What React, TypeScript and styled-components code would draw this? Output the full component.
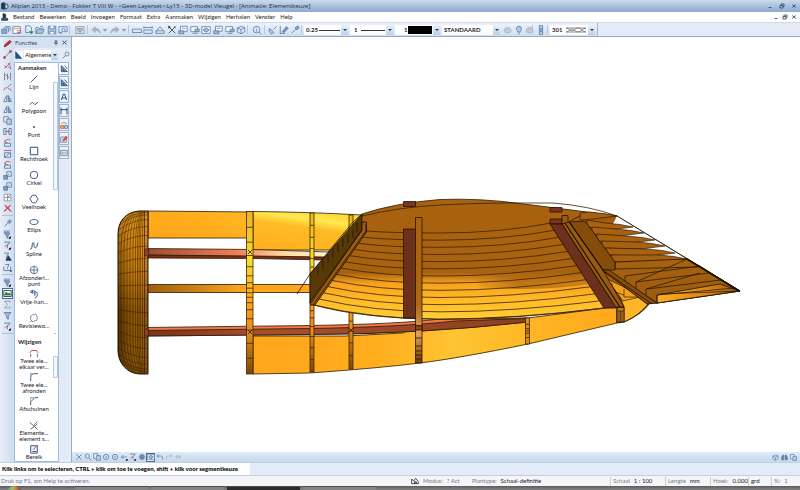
import React from 'react';
import styled, { createGlobalStyle } from 'styled-components';

const ui = 'Lato, "Open Sans", sans-serif';
const titleFont = '"Open Sans", "Noto Sans", sans-serif';
const blue = '#5d7fa8';
const red = '#d0505a';
const grey = '#a9b2be';

const GlobalStyle = createGlobalStyle`
  *, *::before, *::after { box-sizing: border-box; }
  html, body { margin: 0; padding: 0; }
  body { font-family: ${ui}; font-size: 6px; line-height: 6px; color: #1f2329; background: #e3ebf6; overflow: hidden; }
  button, select { font: inherit; color: inherit; margin: 0; padding: 0; border: 0; background: none; border-radius: 0; }
`;

/* ---------- icons ---------- */

type Stroke = [d: string, stroke?: string, fill?: string];

const glyphs: Record<string, Stroke[]> = {
  logo: [['M1 2l4-1v10l-4-1z', '#1d3550', '#1d3550'], ['M6 3h3c2 1 2 6 0 7H6z', '#1d3550', '#bcd3ea']],
  logoSmall: [['M3 1l4 1v5H3z', '#1d3550', '#1d3550'], ['M1 8h9v3H1z', '#1d3550', '#3c5a7a']],
  stack: [['M1 5h6v5H1z', blue, '#8fa9c8'], ['M3 3.5h6v5', blue], ['M5 2h6v5', blue]],
  project: [['M1 2h9v8H1z', blue, '#fff'], ['M1 4.5h9', '#d88a3a'], ['M6 7h5M6 9h5', red]],
  newDoc: [['M2 1h5l2 2v5M2 1v8h4', blue], ['M6 8h5l-2 2.5z', '#2f9a6a', '#2f6f9a']],
  folder: [['M1 10l2-5h8l-2 5z', blue, '#a9c0da'], ['M1 10V3h3l1 1h4', blue], ['M6 2c2-1 3-1 4 1', blue]],
  save: [['M1.500 1.500h9v9h-9z', blue, '#b5c9e0'], ['M3.500 1.500v3h5v-3M3.500 10.500v-3h5v3', blue, '#fff']],
  preview: [['M1 2h10v6H8M1 2v7h3', blue], ['M4.500 6a2 2 0 1 0 4 0a2 2 0 1 0-4 0M5 8l-2 3', blue]],
  keyboard: [['M1 2h10v8H1z', '#8b97a6', '#dfe6ee'], ['M2.500 4.500h7M2.500 6h7M4 8h4', '#77828f']],
  undo: [['M5 2L1 5.500 5 9V7c3-.5 5 0 6 3 0-4-2-6-6-6z', grey, grey]],
  redo: [['M7 2l4 3.500L7 9V7c-3-.5-5 0-6 3 0-4 2-6 6-6z', grey, grey]],
  down: [['M3.500 5h5l-2.500 3z', '#8c97a5', '#8c97a5']],
  ruler: [['M.5 5h11v4H.5z', blue, '#dce8f6']],
  rulerTwo: [['M1 6h10v4H1z', blue, '#dce8f6'], ['M1 3h10M1 1.500v3M11 1.500v3', blue]],
  angle: [['M1 10h10v-3H1z', blue, '#dce8f6'], ['M2 7l4-5 4 5', blue]],
  tools: [['M2 2l8 8', '#36404c'], ['M10 2l-8 8', '#36404c'], ['M1.500 1.500l2.500 1-1.500 1.500zM8.500 1.500l2 2', '#36404c', '#36404c']],
  windowA: [['M3 1.500h8v6H3z', blue, '#fff'], ['M1 7h6v3.500H1z', blue, '#9db6d2'], ['M5 4h4', blue]],
  windowB: [['M1 2h8v6H1z', blue, '#fff'], ['M6 5h5v3H6z', blue, '#9db6d2'], ['M3 10h6', blue]],
  eye: [['M1 2h10v8H1z', blue, '#fff'], ['M2.500 6c2-3 5-3 7 0-2 3-5 3-7 0z', blue, '#9db6d2']],
  cube: [['M1.500 3.500l5-2 4 1.500v5l-4.500 2.500-4.500-2zM1.500 3.500L6 5.500l4.500-2.500M6 5.500v5', blue, '#dce8f6']],
  info: [['M1.500 5.500a4 4 0 1 0 8 0a4 4 0 1 0-8 0M8.500 8.500l2.500 2.500', blue, '#dce8f6'], ['M5.500 5v3M5.500 3v.8', blue]],
  brush: [['M10.500 1.500L6.500 5.500', blue], ['M2 4l5 5-3 2-3-4z', blue, '#b5c9e0']],
  modify: [['M1.500 1v10M1.500 10h6', blue], ['M4 8l5-6 2 2-5 5z', blue, '#6f94c0']],
  pipette: [['M2 10l5-5', blue], ['M6 3.500l2.500 2.500 2.500-3-1.500-2z', blue, '#8aa6c8']],
  wheel: [['M2 4.500h6l2 2-2 3H3l-1.500-2z', grey, '#c5cdd6'], ['M3 2.500l6 1', grey]],
  bulb: [['M3 4.500a3 3 0 1 1 6 0c0 2-1.500 2-1.500 4h-3c0-2-1.500-2-1.500-4zM5 10.500h2', blue, '#a9ccee']],
  weave: [['M4 .5v11h4V.5zM4 3l4 3-4 3M8 3L4 6l4 3', blue, '#c3d2e4']],
  marker: [['M1.500 10.500L3 7l6-5 2 2-6 5z', '#8d1f28', '#d8323e']],
  line: [['M2 10l8-8', red], ['M1 9h2v2H1zM9 1h2v2H9z', '#a04850', '#a04850']],
  lineCut: [['M2 10l8-8M2 6l3 3M7 3l3 4', red], ['M7 8h3v3', blue]],
  trim: [['M2 1v10M10 1v10M6 2v8', '#76818d'], ['M3 3l5 5', red]],
  curve: [['M1 10c2-6 3-2 5-4s3-4 5-4', red], ['M7 7l4 3', '#59636e']],
  mirror: [['M5 2v8H1z', blue, '#f3f7fb'], ['M7 2v8h4z', blue, '#84a0c0']],
  copy: [['M1 1h6v7H1z', blue, '#eef4fa'], ['M5 4h6v7H5z', blue, '#bcd0e6']],
  moveTo: [['M1 2h3v8H1zM8 2h3v8H8z', blue, '#d6e3f1'], ['M3.500 6h5M7 4.500L8.500 6 7 7.500', red]],
  rotate: [['M2 5c1-3 5-4 8-2', red], ['M2 7h8v4H2z', blue, '#dce8f6'], ['M3 3v3h3', red]],
  stretch: [['M1 2h10', red], ['M2 5h8v6H2zM2 11l8-6', blue, '#dce8f6']],
  boxes: [['M5 1h6v6H5z', blue, '#dce8f6'], ['M1 6h5v5H1z', blue, '#84a0c0'], ['M4 8l4-4', '#6b88ad']],
  grid: [['M1.500 1.500h9v9h-9zM1.500 6h9M6 1.500v9', '#8896a8', '#fff'], ['M6 6l3-3', red]],
  remove: [['M2 2l8 8M10 2l-8 8', '#e0454f'], ['M3 1l8 9M10 1L1 10', '#d02b36']],
  filter: [['M1.500 2h9L7 6.500V11L5 9.500v-3z', blue, '#a9c0da']],
  filterTop: [['M1 1.500h8M1 3.500h8', blue], ['M2 5h7L6.500 8v3L5 10V8z', blue, '#84a0c0'], ['M10 9v2H8z', '#111', '#111']],
  filterRed: [['M1.500 1.500h8L6 5.500v4', blue], ['M2 8l5-4', red], ['M10 9v2H8z', '#111', '#111']],
  filterMan: [['M1.500 1.500h6L5 5.500v3', blue], ['M7 5l4 6H4z', '#2b3f58', '#2b3f58']],
  filterBox: [['M1 5v5h9V5M3 2h5L6 6v2', blue, '#dce8f6'], ['M11 10v1h-1z', '#111', '#111']],
  picture: [['M1 2h10v8H1z', '#2e4a2e', '#fff'], ['M2 8l2.500-4 2 3 2-2L10 8z', '#3f8d4a', '#27497c']],
  sigma: [['M9.500 3.500V1.500H2L6 6l-4 4.500h7.500v-2', '#929da9']],
  magnifier: [['M4.500 4.500a3 3 0 1 0 6 0a3 3 0 1 0-6 0', blue, '#e4eefa'], ['M5 7l-4 4', '#6b5a5a']],
  triangle: [['M1 1v10h9zM3.500 6.500v2.500h2.500z', '#22508a', '#22508a']],
  setSquare: [['M2 1v9h9zM4.500 6v2h2z', '#31567f', '#7f9fc4'], ['M7 1l4 5', '#31567f']],
  letterA: [['M2 10.500L5.200 1.500h1.600L10 10.500M3.500 7.500h5', '#22508a']],
  dimension: [['M1.500 1v10M10.500 1v10M1.500 4h9', '#22508a'], ['M3 3v2M9 3v2', '#22508a']],
  edit: [['M1 7h5v4H1z', '#d8743a', '#f0b080'], ['M7 7h4v4H7z', blue, '#dce8f6'], ['M2 4c2-2 5-2 8 0', '#d8743a']],
  redPen: [['M1 3h9v8H1z', '#8896a8', '#d8dfe8'], ['M4 8l5-6 2 2-5 5z', red, red]],
  plate: [['M1 2h10v8H1z', '#8896a8', '#d8dfe8'], ['M2 6h8M4 4v4', '#a3adba']],
  segment: [['M2 10l8-8', '#3d6090']],
  polyline: [['M1 8l3-3 3 3 4-3', '#3d6090']],
  point: [['M5.500 5.500h1v1h-1z', '#22508a', '#22508a']],
  rect: [['M1.500 1.500h9v9h-9z', '#22508a']],
  circle: [['M1.500 6a4.500 4.500 0 1 0 9 0a4.500 4.500 0 1 0-9 0', '#3d6090']],
  hexagon: [['M4 1.500h4l3 4.500-3 4.500H4L1 6z', '#3d6090']],
  ellipse: [['M1 6c0-4 10-4 10 0s-10 4-10 0z', '#3d6090']],
  spline: [['M1.500 10C5 9 3 2 5 2s0 7 3 6 1-5 3-6', '#22508a']],
  target: [['M1.500 6a4.500 4.500 0 1 0 9 0a4.500 4.500 0 1 0-9 0M6 1v10M1 6h10', '#6080a8']],
  freehand: [['M2 4c0-3 4-3 5-1 4 0 4 7 0 8M7 3v5M2 4l3 1-1-3', '#22508a']],
  cloud: [['M3 3c1-2 2 0 3-1s3-1 3 1 2 2 1 3 0 3-1 3-2 0-3 1-3 0-3-1-2-1-1-3-1-2 1-3zM3 9l-2 2', '#5f82ae']],
  join: [['M2 11V7M10 11V7', '#6a7888'], ['M1 6l2-3h6l2 3M3 3h6', red]],
  fillet: [['M2 11V7c0-4 2-5 5-5h4', '#3d6090'], ['M2 6V1M2 2h4', '#9aabbf']],
  chamfer: [['M2 11V7l5-5h4', '#3d6090'], ['M2 6V1M2 2h4', '#9aabbf']],
  erase: [['M1 3l9 8M10 5l-8 6', '#5a6674'], ['M6 6l4-4', red]],
  area: [['M2 2h8v9H2zM4 9h5', '#3d6090', '#e8f0fa'], ['M5 7l5-6', red]],
  cross: [['M2 2l8 8M10 2l-8 8', blue]],
  zoomIn: [['M2 4.500a3 3 0 1 0 6 0a3 3 0 1 0-6 0M7 7l4 4', blue, '#dce8f6']],
  target2: [['M2 6a4 4 0 1 0 8 0a4 4 0 1 0-8 0', blue], ['M5 6h2M6 5v2', blue]],
  back: [['M10 6H2M5 3L2 6l3 3', blue], ['M11 9v2H9z', '#111', '#111']],
  undoBlue: [['M4 2L1.500 4.500 4 7M2 4.500h5c3 0 3 2 3 5', blue]],
  forward: [['M8 2l2.500 2.500L8 7M10 4.500H5c-3 0-3 2-3 5', grey]],
  both: [['M1 6h10M4 3v6M8 3v6', grey]],
  axis: [['M6 1v10M1 6h10M3 3h6v6H3z', blue, '#84a0c0']],
  binoculars: [['M1 10V6l1.500-4h2V10zM7 10V2h2l2 4v4z', blue, blue]],
  mode: [['M1 10V3l3 3 3-4 4 5v3z', '#1d2329', '#fff'], ['M5 7h3v2H5z', '#1d2329']],
  min: [['M3 9h6', '#2d4f7c']],
  restore: [['M2 5h6v5H2zM4 5V2h6v5H8', '#2d4f7c']],
  close: [['M2.500 3l7 6M9.500 3l-7 6', '#2d4f7c']],
  pin: [['M4 1.500h4V7H4zM2.500 7h7M6 7v4', '#4b5563', '#9aa5b2']],
};

const Svg = styled.svg<{ $s?: number }>`
  display: block;
  flex: none;
  width: ${p => p.$s ?? 9}px;
  height: ${p => p.$s ?? 9}px;
`;

const Icon = ({ name, size, w = 1.2 }: { name: string; size?: number; w?: number }) => (
  <Svg $s={size} viewBox="0 0 12 12" aria-hidden="true">
    {glyphs[name].map(([d, s, f], i) => (
      <path key={i} d={d} stroke={s} fill={f ?? 'none'} strokeWidth={w} />
    ))}
  </Svg>
);

/* ---------- frame ---------- */

const Window = styled.div`
  display: flex;
  flex-direction: column;
  height: 100vh;
`;

const TitleBar = styled.header`
  flex: none;
  display: flex;
  align-items: center;
  gap: 2px;
  height: 12px;
  padding: 0 1px;
  background: linear-gradient(#cbdaea, #a9c1dc 50%, #8cabd0);
`;

const Title = styled.h1`
  flex: 1;
  margin: 0;
  font-family: ${titleFont};
  font-size: 6px;
  font-weight: 400;
  line-height: 10px;
  white-space: nowrap;
  color: #1c2b3f;
`;

const IconButton = styled.button<{ $w?: number; $h?: number; $on?: boolean }>`
  flex: none;
  display: flex;
  align-items: center;
  justify-content: center;
  width: ${p => p.$w ?? 11}px;
  height: ${p => p.$h ?? 11}px;
  ${p => p.$on && 'background: #f6f9fd; box-shadow: inset 0 0 0 1px #4a6d98;'}
`;

const MenuBar = styled.nav`
  flex: none;
  display: flex;
  align-items: center;
  height: 10px;
  padding: 0 2px 0 1px;
  background: #fff;
`;

const Menus = styled.div`
  flex: 1;
  display: flex;
  gap: 5px;
  padding-left: 4px;
`;

const MenuItem = styled.button`
  height: 10px;
  line-height: 10px;
  white-space: nowrap;
`;

const Toolbar = styled.div`
  flex: none;
  display: flex;
  align-items: center;
  height: 15px;
  border-top: 1px solid #d3dae3;
  border-bottom: 1px solid #9aa9bc;
  background: #e3ebf6;
`;

const Band = styled.div`
  display: flex;
  align-items: center;
  height: 13px;
  background: linear-gradient(#edf3fb, #cfdff1);
  border-right: 1px solid #a9b8cb;
`;

const Group = styled.div<{ $w: number }>`
  display: grid;
  grid-auto-flow: column;
  grid-auto-columns: 1fr;
  justify-items: center;
  width: ${p => p.$w}px;
  margin-right: 3px;
  box-shadow: 2px 0 0 -1px #b9c8da;
`;

const Combo = styled.div<{ $w: number; $h?: number }>`
  flex: none;
  display: grid;
  grid-template-columns: 1fr 7px;
  align-items: center;
  width: ${p => p.$w}px;
  height: ${p => p.$h ?? 10}px;
  margin-right: 2px;
  background: #fff;
`;

const Choice = styled.select<{ $bold?: boolean; $pad?: number }>`
  grid-area: 1 / 1 / 2 / 3;
  appearance: none;
  width: 100%;
  height: 100%;
  padding-left: ${p => p.$pad ?? 2}px;
  font-weight: ${p => (p.$bold ? 700 : 400)};
  line-height: 8px;
`;

const Sample = styled.svg`
  grid-area: 1 / 1;
  justify-self: end;
  width: 24px;
  height: 8px;
  margin-right: 1px;
  pointer-events: none;
`;

const Arrow = styled.span`
  grid-area: 1 / 2;
  display: grid;
  place-items: center;
  height: 100%;
  background: linear-gradient(#eaf2fb, #b9d0ea);
  pointer-events: none;
  &::after { content: ''; border: 2px solid transparent; border-top-color: #2c3848; border-bottom: 0; }
`;

const DropDown = ({ label, value, width, bold = true, pad, height, children }: {
  label: string; value: string; width: number; bold?: boolean; pad?: number; height?: number; children?: React.ReactNode;
}) => (
  <Combo $w={width} $h={height}>
    <Choice aria-label={label} $bold={bold} $pad={pad}><option>{value}</option></Choice>
    {children}
    <Arrow />
  </Combo>
);

/* ---------- body ---------- */

const Body = styled.div`
  flex: 1;
  min-height: 0;
  display: flex;
`;

const ToolStrip = styled.aside`
  flex: none;
  display: flex;
  flex-direction: column;
  align-items: center;
  width: 14px;
  padding-top: 1px;
  background: linear-gradient(90deg, #e6eef8, #cddcee);
`;

const StripGroup = styled.div`
  padding-bottom: 1px;
  margin-bottom: 2px;
  border-bottom: 1px solid #aebfd4;
`;

const Panel = styled.section`
  flex: none;
  display: flex;
  flex-direction: column;
  width: 58px;
  background: #e3ebf6;
  border-right: 1px solid #9fabbc;
`;

const PanelHead = styled.div`
  flex: none;
  display: flex;
  align-items: center;
  height: 11px;
  padding: 0 2px 0 1px;
  color: #35506f;
  background: #d5e2f1;
`;

const PanelTitle = styled.h2`
  flex: 1;
  margin: 0;
  font-size: 6px;
  font-weight: 400;
  line-height: 8px;
`;

const PanelPick = styled.div`
  flex: none;
  display: flex;
  align-items: center;
  gap: 1px;
  height: 14px;
  padding-left: 1px;
  > svg { background: #fff; }
`;

const PanelBody = styled.div`
  flex: 1;
  min-height: 0;
  display: flex;
`;

const Lists = styled.div`
  flex: none;
  display: flex;
  flex-direction: column;
  width: 45px;
  overflow: hidden;
  background: #fff;
  border: 1px solid #9fbbdd;
`;

const Section = styled.div<{ $h: number }>`
  flex: none;
  display: grid;
  grid-template: 11px 1fr / 38px 4px;
  height: ${p => p.$h}px;
`;

const SectionTitle = styled.h3`
  grid-column: 1 / 3;
  margin: 0;
  padding-left: 3px;
  font-size: 6px;
  font-weight: 700;
  line-height: 10px;
`;

const Items = styled.div`
  display: grid;
  grid-auto-rows: 1fr;
  min-height: 0;
`;

const Item = styled.button`
  display: flex;
  flex-direction: column;
  align-items: center;
  min-height: 0;
  line-height: 6px;
  white-space: pre;
  text-align: center;
`;

const Track = styled.div<{ $thumb: number }>`
  display: flex;
  flex-direction: column;
  justify-content: space-between;
  align-items: center;
  padding: 8px 0 2px;
  &::before {
    content: '';
    width: 5px;
    height: ${p => p.$thumb}px;
    border: 1px solid #b4c8e0;
    border-radius: 1px;
    background: #f4f8fd;
  }
  &::after { content: ''; border: 1px solid transparent; border-top-color: #5b7fae; }
`;

const Tabs = styled.div`
  display: flex;
  flex-direction: column;
  gap: 1px;
`;

const Tab = styled.button<{ $on?: boolean }>`
  display: grid;
  place-items: center;
  width: 10px;
  height: 13px;
  background: ${p => (p.$on ? '#fff' : '#edf3fa')};
  border: 1px solid #9fb3cc;
  border-left-width: ${p => (p.$on ? 0 : 1)}px;
`;

const Main = styled.main`
  flex: 1;
  min-width: 0;
  display: flex;
  flex-direction: column;
  background: #fff;
`;

const Scene = styled.svg`
  flex: 1;
  display: block;
  width: 100%;
  min-height: 0;
`;

const ViewBar = styled.div`
  flex: none;
  display: flex;
  align-items: center;
  height: 10px;
  padding: 0 2px;
  background: linear-gradient(#dfeaf6, #c6d9ed);
`;

const Spacer = styled.div`flex: 1;`;

const Prompt = styled.div`
  flex: none;
  height: 14px;
  border-top: 1px solid #c3cfdf;
  border-bottom: 1px solid #c3cfdf;
  background: #e3ebf6;
`;

const PromptText = styled.p`
  width: 250px;
  height: 12px;
  margin: 0;
  padding-left: 2px;
  font-weight: 900;
  line-height: 12px;
  white-space: nowrap;
  color: #000;
  background: #fff;
`;

const Status = styled.footer`
  flex: none;
  display: flex;
  align-items: center;
  height: 10px;
  color: #737a84;
  background: #f3f5f8;
  line-height: 10px;
  white-space: nowrap;
`;

const Hint = styled.span`
  flex: 1;
  padding-left: 1px;
`;

const Cell = styled.span<{ $w: number; $line?: boolean }>`
  display: flex;
  align-items: center;
  gap: 4px;
  width: ${p => p.$w}px;
  height: 9px;
  padding-left: 2px;
  ${p => p.$line && 'border-left: 1px solid #c9ced6;'}
`;

const Value = styled.button`color: #16191e;`;

const TaskBar = styled.div`
  flex: none;
  display: flex;
  gap: 3px;
  height: 4px;
  overflow: hidden;
  background: linear-gradient(#5c5c5c, #848484);
`;

const Start = styled.button`
  width: 18px;
  height: 18px;
  margin: 0 49px 0 5px;
  border-radius: 50%;
  background: linear-gradient(90deg, #3a77a8, #9fc46a 40%, #e07b3c 60%, #2d3c50);
`;

const Task = styled.button<{ $on?: boolean }>`
  width: 73px;
  border-top: 1px solid #4c4c4c;
  background: ${p => (p.$on ? '#2c2c2c' : '#858585')};
`;

/* ---------- drawing ---------- */

const lerp = (a: number, b: number, t: number) => a + (b - a) * t;
const range = (n: number) => Array.from({ length: n }, (_, i) => i);

const strakes = range(13).map(i => {
  const t = i / 12;
  const y = 233 + 86 * t;
  return `M${lerp(367, 314, t)} ${lerp(231, 305, t)}Q${lerp(392, 372, t)} ${y} 440 ${y}Q${lerp(500, 515, t)} ${y} ${lerp(551, 604, t)} ${lerp(223, 308, t)}`;
});

const Rib = ({ x, w, y, h, fill, n }: { x: number; w: number; y: number; h: number; fill: string; n: number }) => (
  <g fill={fill} stroke="#3f2600" strokeWidth=".8">
    <rect x={x} y={y} width={w} height={h} />
    <path d={range(n).map(i => {
      const t = (i + 1) / (n + 1);
      const s = t - 0.09 * Math.sin(2 * Math.PI * t);
      return `M${x} ${y + h * (2 * t - s)}h${w}`;
    }).join('')} />
  </g>
);

/* left x, top y, tip x, tip y */
const planks = [
  [580, 212, 617, 216], [587, 219, 633, 227], [592, 226, 644, 233], [597, 233, 655, 240],
  [602, 240, 665, 246], [606, 247, 675, 253], [611, 254, 687, 259],
];

const Wing = () => (
  <Scene viewBox="72 37 728 415" preserveAspectRatio="xMidYMid meet" role="img" aria-label="Vleugel 3D">
    <defs>
      <linearGradient id="cap"><stop offset="0" stopColor="#4a2e05" /><stop offset=".3" stopColor="#9d600b" /><stop offset=".75" stopColor="#c77f15" /><stop offset="1" stopColor="#a8680e" /></linearGradient>
      <linearGradient id="capShade" x2="0" y2="1"><stop offset="0" stopColor="#ffb020" stopOpacity=".65" /><stop offset=".35" stopColor="#e89018" stopOpacity=".35" /><stop offset=".6" stopColor="#5a3500" stopOpacity=".4" /><stop offset="1" stopColor="#4a2c00" stopOpacity=".4" /></linearGradient>
      <linearGradient id="topLeft" y1="1" y2=".5"><stop offset="0" stopColor="#ffa51c" /><stop offset=".6" stopColor="#ffac1c" /><stop offset="1" stopColor="#ffb622" /></linearGradient>
      <linearGradient id="top" x1=".2" y1="1" x2=".6" y2="0"><stop offset="0" stopColor="#ffb01e" /><stop offset=".6" stopColor="#ffbc26" /><stop offset=".8" stopColor="#ffe850" /><stop offset="1" stopColor="#ffd838" /></linearGradient>
      <linearGradient id="low"><stop offset="0" stopColor="#ffa61c" /><stop offset=".35" stopColor="#ffae1e" /><stop offset=".55" stopColor="#ffc432" /><stop offset=".8" stopColor="#ffb422" /><stop offset="1" stopColor="#ffa81c" /></linearGradient>
      <linearGradient id="rib" x2="0" y2="1"><stop offset="0" stopColor="#eeb321" /><stop offset=".3" stopColor="#f7e02b" /><stop offset=".55" stopColor="#ffa51c" /><stop offset=".75" stopColor="#e58a18" /><stop offset="1" stopColor="#7a4808" /></linearGradient>
      <linearGradient id="sparA"><stop offset="0" stopColor="#9c4a30" /><stop offset=".5" stopColor="#f08058" /><stop offset=".75" stopColor="#ffd9a0" /><stop offset="1" stopColor="#fff6c8" /></linearGradient>
      <linearGradient id="sparB"><stop offset="0" stopColor="#9a5c10" /><stop offset=".6" stopColor="#ffa61c" /></linearGradient>
      <linearGradient id="sparC"><stop offset="0" stopColor="#7a3018" /><stop offset=".3" stopColor="#a8502e" /><stop offset="1" stopColor="#8c4020" /></linearGradient>
      <linearGradient id="hull" x2="0" y2="1"><stop offset="0" stopColor="#a8620f" /><stop offset=".61" stopColor="#a8620f" /><stop offset=".7" stopColor="#f7a11c" /><stop offset=".82" stopColor="#ffb826" /><stop offset="1" stopColor="#ffce36" /></linearGradient>
      <linearGradient id="hullRight"><stop offset="0" stopColor="#a8620f" stopOpacity="0" /><stop offset=".4" stopColor="#a8620f" stopOpacity=".7" /><stop offset="1" stopColor="#a8620f" stopOpacity=".5" /></linearGradient>
      <linearGradient id="post" x2="0" y2="1"><stop offset="0" stopColor="#a8620f" /><stop offset=".6" stopColor="#b0690f" /><stop offset=".8" stopColor="#e0a060" /><stop offset="1" stopColor="#6a3c05" /></linearGradient>
      <linearGradient id="tail" x2="0" y2="1"><stop offset="0" stopColor="#a8620f" /><stop offset="1" stopColor="#9a5a0e" /></linearGradient>
      <linearGradient id="tailEdge"><stop offset="0" stopColor="#ffac20" /><stop offset=".6" stopColor="#d98516" /><stop offset="1" stopColor="#9a5a0e" /></linearGradient>
      <clipPath id="capClip"><path d="M148 211H139C126 212 118 221 118 234V350C118 364 128 374 141 374H148Z" /></clipPath>
    </defs>

    <g stroke="#2a1a00" strokeWidth=".8">
      <path d="M148 211L253 212V238H148Z" fill="url(#topLeft)" />
      <path d="M253 211.500Q310 212 362 215V250H253Z" fill="url(#top)" />
      <path d="M253 336H345L403 333 422 322 528 318 605 308 617 307V323L528 344Q460 358 420 363T310 373L253 374Z" fill="url(#low)" />
      <path d="M145 248.500L253 249.500 330 252V257.500L253 257 145 255Z" fill="url(#sparA)" />
      <path d="M145 255L253 256 325 257V260L253 258.500 148 258Z" fill="#7a2e1c" />
      <path d="M145 284.500H311V292.500H145Z" fill="url(#sparB)" />
      <path d="M145 327.500L310 325.500Q400 324 440 319L528 318V322Q420 334 310 334.500L145 336Z" fill="#f57648" />
      <path d="M145 330.500L310 328.500Q400 327 455 321L528 318.500V322Q420 334 310 334.500L145 336Z" fill="url(#sparC)" />
    </g>

    <Rib x={246.500} w={6.500} y={211.500} h={162.500} n={15} fill="url(#rib)" />
    <Rib x={310} w={4} y={213} h={159} n={19} fill="url(#rib)" />
    <Rib x={349} w={4} y={215} h={154} n={17} fill="url(#rib)" />
    <Rib x={525.500} w={4} y={318} h={26} n={5} fill="#d98a2a" />

    <g clipPath="url(#capClip)">
      <path d="M118 211H148V374H118Z" fill="url(#cap)" />
      <path d="M118 211H148V374H118Z" fill="url(#capShade)" />
      <g fill="none" stroke="#2a1a00" strokeWidth=".6" opacity=".8">
        {[121, 124, 127, 130, 133, 135.500, 137.500, 139, 140.500, 142.500].map(x => (
          <path key={x} d={`M${lerp(x, 144, 0.5)} 211Q${x} 222 ${x} 248V338Q${x} 363 ${lerp(x, 144, 0.5)} 374`} />
        ))}
        {range(18).map(i => {
          const t = (i + 0.5) / 18;
          const y = 292 - 80 * Math.cos(Math.PI * t);
          return <path key={i} d={`M148 ${y}Q132 ${y} 118 ${y + 12 * Math.cos(Math.PI * t)}`} />;
        })}
      </g>
      <path d="M144.500 211V374" stroke="#2a1a00" strokeWidth=".7" />
    </g>
    <path d="M148 211H139C126 212 118 221 118 234V350C118 364 128 374 141 374H148Z" fill="none" stroke="#1d1200" />
    <path d="M144.500 249h4v7h-4zM144.500 329h4v7h-4z" fill="#8c4028" stroke="#3a1a08" strokeWidth=".6" />
    <path d="M248 250l4 4m0-4l-4 4M248 330l4 4m0-4l-4 4M349 328l4 4m0-4l-4 4" stroke="#2a1a00" strokeWidth=".8" />

    <path d="M362 214Q395 203 440 199.500 480 198 520 203.500L587 212 617 216 625 250 604 308Q520 319 440 319.500 360 318 314 305Z" fill="url(#hull)" stroke="#2a1a00" strokeWidth=".8" />
    <path d="M470 276Q540 276 582 266L590 284Q540 292 480 287Z" fill="url(#hullRight)" />
    <g fill="none" stroke="#3a2200" strokeWidth=".8">
      {strakes.map(d => <path key={d} d={d} />)}
      <path d="M362 216Q400 207 440 205T507 203 553 203Q590 206 617 216" />
    </g>

    <g stroke="#2a1200" strokeWidth=".8" fill="#6c301c">
      <path d="M403.500 229H415.500V318H403.500Z" />
      <path d="M403.500 201.500H415.500V206.500H403.500ZM550 207.500H562V212H550ZM550 219H562V224H550Z" fill="#7a3420" />
      <path d="M415.500 217.500H422V363H415.500Z" fill="url(#post)" />
      <path d="M415.500 325.500H422V330H415.500Z" fill="#8c4020" />
      <path d="M415.500 338h6.500m-6.500 8h6.500m-6.500 5h6.500m-6.500 4h6.500m-6.500 4h6.500" />
    </g>

    <g stroke="#1d1200" strokeWidth=".8">
      <path d="M362 214L310 274V303L362 230Z" fill="#573907" />
      <path d="M362 222H366.500V232L315 305H311L310 302 362 230Z" fill="#9a5c10" />
      <path d="M362 230L311 303M366 224V231L313 305M297 294L310 274 353 222 362 214" fill="none" />
      <path d="M357 223v9m-4-3v9m-5-4v9m-5-5v9m-5-4v9m-5-4v10m-5-4v9m-5-3v9m-5-2v8" stroke="#241600" />
    </g>

    <g stroke="#1d1200" strokeWidth=".8">
      <path d="M585 213L617 216 740 291 657 303 650 303Q641 315 624 322L617 323V307L565 224Z" fill="#a05d0f" />
      <path d="M617 216L687 259 660 262 610 230Z" fill="#fff" stroke="none" />
      {planks.map(([x, y, tx, ty]) => (
        <path key={x} d={`M${x} ${y + 1}L${tx - 28} ${ty - 4}Q${tx - 12} ${ty - 3} ${tx} ${ty}L${tx - 24} ${ty + 3} ${x} ${y + 8}Z`} fill="#a8620f" strokeWidth=".6" />
      ))}
      <path d="M615 269L615 262 687 259 740 291 657 303 602 270Z" fill="url(#tail)" />
      <path d="M657 295L720 284 740 291 657 303Z" fill="url(#tailEdge)" />
      <path d="M615 269L699 267M625 276L700 266 733 287M636 282L709 273M647 289L721 280M657 295L735 288M636 282L687 259M646 289L700 273M660 294L740 291M625 276V284M636 282V290M646 289V296M657 295V303" fill="none" strokeWidth=".7" />
      <path d="M617 290L624 287 648 304Q640 315 624 322V307Z" fill="#ffb426" />
      <path d="M607 279L622 286 640 297 623 301Z" fill="#f2a01e" strokeWidth=".6" />
      <path d="M604 274v8l12 9M612 283v8l12 4M624 289v8h14" fill="none" strokeWidth=".6" />
      <path d="M569 222L585 221 615 262V270H603Z" fill="#864c0c" />
      <path d="M562 215.500H568V224H562Z" fill="#9a5a10" />
      <path d="M562 224L569 222 603 270 624 307H616Z" fill="#9a5a10" />
      <path d="M565 223L620 307M570 223L605 273" fill="none" strokeWidth="1.200" />
      <path d="M602 270L609 270 657 303 647 304Z" fill="#864c0c" />
      <path d="M604 271L652 304" fill="none" />
      <path d="M550 224H562L616 308H604Z" fill="#6c301c" />
      <path d="M617 307.500H624V322H617Z" fill="#c07820" />
      <path d="M619 311v11m1.500-11v11m1.500-11v11M617 311h7" strokeWidth=".5" />
      <path d="M617 216L740 291" fill="none" />
      <path d="M687 259L740 291.500" fill="none" strokeWidth="1.800" />
    </g>
  </Scene>
);

/* ---------- page ---------- */

const menuNames = ['Bestand', 'Bewerken', 'Beeld', 'Invoegen', 'Formaat', 'Extra', 'Aanmaken', 'Wijzigen', 'Herhalen', 'Venster', 'Help'];

const create: [string, string][] = [
  ['segment', 'Lijn'], ['polyline', 'Polygoon'], ['point', 'Punt'], ['rect', 'Rechthoek'], ['circle', 'Cirkel'], ['hexagon', 'Veelhoek'],
  ['ellipse', 'Ellips'], ['spline', 'Spline'], ['target', 'Afzonderl...\npunt'], ['freehand', 'Vrije-han...'], ['cloud', 'Revisiewo...'],
];
const change: [string, string][] = [
  ['join', 'Twee ele...\nelkaar ver...'], ['fillet', 'Twee ele...\nafronden'], ['chamfer', 'Afschuinen'], ['erase', 'Elemente...\nelement s...'], ['area', 'Bereik'],
];

const strip = [
  ['marker', 'line', 'lineCut', 'trim', 'curve', 'mirror', 'mirror', 'copy', 'moveTo', 'rotate', 'stretch', 'rotate', 'boxes', 'boxes', 'grid', 'remove'],
  ['pipette', 'filterTop', 'filterRed', 'filterMan', 'filterBox'],
  ['filterTop', 'picture', 'sigma', 'filter', 'filterRed'],
];

const Tools = ({ names, width }: { names: string[]; width: number }) => (
  <Group $w={width}>
    {names.map((n, i) => <IconButton key={i} aria-label={n} $w={n === 'down' ? 6 : 11}><Icon name={n} size={n === 'down' ? 8 : 10} w={1} /></IconButton>)}
  </Group>
);

const List = ({ title, items, height, thumb }: { title: string; items: [string, string][]; height: number; thumb: number }) => (
  <Section $h={height}>
    <SectionTitle>{title}</SectionTitle>
    <Items>
      {items.map(([icon, label]) => <Item key={label}><Icon name={icon} size={10} w={1.2} />{label}</Item>)}
    </Items>
    <Track $thumb={thumb} />
  </Section>
);

export default function App() {
  return (
    <Window>
      <GlobalStyle />
      <TitleBar>
        <Icon name="logo" size={8} />
        <Title>{'Allplan 2013 - Demo - Fokker T VIII W - <Geen Layerset>:Ly15 - 3D-model Vleugel - [Animatie: Elementkeuze]'}</Title>
        {['min', 'restore', 'close'].map(n => <IconButton key={n} aria-label={n} $w={10}><Icon name={n} size={6} w={1.8} /></IconButton>)}
      </TitleBar>
      <MenuBar>
        <Icon name="logoSmall" size={8} />
        <Menus>{menuNames.map(m => <MenuItem key={m}>{m}</MenuItem>)}</Menus>
        {['min', 'restore', 'close'].map(n => <IconButton key={n} aria-label={`${n} document`} $w={9} $h={9}><Icon name={n} size={6} w={1.8} /></IconButton>)}
      </MenuBar>
      <Toolbar>
        <Band>
          <Tools width={69} names={['stack', 'project', 'newDoc', 'folder', 'save', 'preview']} />
          <Tools width={15} names={['keyboard']} />
          <Tools width={38} names={['undo', 'down', 'redo', 'down']} />
          <Tools width={116} names={['ruler', 'rulerTwo', 'angle', 'tools', 'windowA', 'windowB', 'eye', 'windowA', 'windowB', 'cube']} />
          <Tools width={14} names={['info']} />
          <Tools width={34} names={['brush', 'modify', 'pipette']} />
          <DropDown label="Pendikte" value="0.25" width={44}><Sample viewBox="0 0 24 8"><path d="M3 4.500h21" stroke="#333" /></Sample></DropDown>
          <DropDown label="Lijntype" value="1" width={43} pad={4}><Sample viewBox="0 0 24 8"><path d="M0 4.500h24" stroke="#333" /></Sample></DropDown>
          <DropDown label="Kleur" value="1" width={45} pad={9}><Sample viewBox="0 0 24 8"><path d="M0 0h24v8H0z" /></Sample></DropDown>
          <DropDown label="Layer" value="STANDAARD" width={58} />
          <Tools width={30} names={['wheel', 'bulb', 'wheel']} />
          <Tools width={12} names={['weave']} />
          <DropDown label="Patroon" value="301" width={45}><Sample viewBox="0 0 24 8"><path d="M3 2q2 0 4 2t4 0 4-2 4 2 4 2M3 6q2 0 4-2t4 0 4 2 4-2 4-2M3 2h20M3 6h20" fill="none" stroke="#666" strokeWidth=".7" /></Sample></DropDown>
        </Band>
      </Toolbar>
      <Body>
        <ToolStrip>
          {strip.map((g, i) => (
            <StripGroup key={i}>{g.map((n, j) => <IconButton key={j} aria-label={n} $on={n === 'picture'}><Icon name={n} /></IconButton>)}</StripGroup>
          ))}
        </ToolStrip>
        <Panel>
          <PanelHead>
            <PanelTitle>Functies</PanelTitle>
            <IconButton aria-label="Vastzetten" $w={9}><Icon name="pin" size={6} /></IconButton>
            <IconButton aria-label="Sluiten" $w={9}><Icon name="close" size={7} w={1.6} /></IconButton>
          </PanelHead>
          <PanelPick>
            <Icon name="triangle" size={8} />
            <DropDown label="Module" value="Algemene" width={34} bold={false} pad={1} />
            <IconButton aria-label="Zoeken" $w={9}><Icon name="magnifier" size={8} /></IconButton>
          </PanelPick>
          <PanelBody>
            <Lists>
              <List title="Aanmaken" items={create} height={274} thumb={108} />
              <List title="Wijzigen" items={change} height={131} thumb={22} />
            </Lists>
            <Tabs>
              {['setSquare', 'setSquare', 'letterA', 'dimension', 'edit', 'redPen', 'plate'].map((n, i) => (
                <Tab key={i} aria-label={n} $on={i === 0}><Icon name={n} size={8} w={1.5} /></Tab>
              ))}
            </Tabs>
          </PanelBody>
        </Panel>
        <Main>
          <Wing />
          <ViewBar>
            {['cross', 'zoomIn', 'copy', 'target2', 'target2', 'back', 'filterRed', 'axis', 'eye', 'undoBlue', 'forward', 'both'].map((n, i) => (
              <IconButton key={i} aria-label={n} $w={9} $h={9} $on={n === 'eye'}><Icon name={n} size={8} /></IconButton>
            ))}
            <Spacer />
            {['cube', 'binoculars', 'copy'].map(n => <IconButton key={n} aria-label={n} $w={9} $h={9}><Icon name={n} size={7} /></IconButton>)}
          </ViewBar>
        </Main>
      </Body>
      <Prompt><PromptText>Klik links om te selecteren, CTRL + klik om toe te voegen, shift + klik voor segmentkeuze</PromptText></Prompt>
      <Status>
        <Hint>Druk op F1, om Help te activeren.</Hint>
        <Cell $w={61}><Icon name="mode" size={8} /><span>Modus:</span><span>? Act</span></Cell>
        <Cell $w={140}><span>Plantype:</span><Value>Schaal-definitie</Value></Cell>
        <Cell $w={55} $line><span>Schaal</span><Value>1 : 100</Value></Cell>
        <Cell $w={45} $line><span>Lengte</span><Value>mm</Value></Cell>
        <Cell $w={38} $line><span>Hoek:</span><Value>0.000</Value></Cell>
        <Cell $w={23} $line><Value>grd</Value></Cell>
        <Cell $w={29} $line><span>%:</span><span>1</span></Cell>
      </Status>
      <TaskBar>
        <Start aria-label="Start" />
        <Task aria-label="Taak 1" /><Task aria-label="Taak 2" /><Task aria-label="Taak 3" $on /><Task aria-label="Taak 4" />
      </TaskBar>
    </Window>
  );
}
